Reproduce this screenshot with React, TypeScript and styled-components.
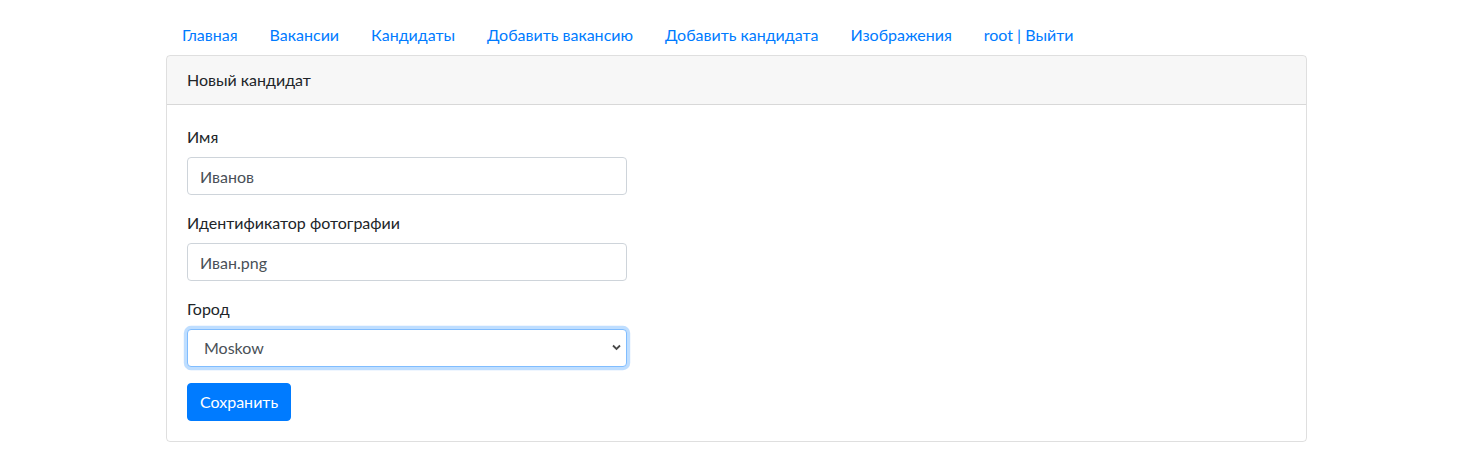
import React from "react";
import styled, { createGlobalStyle } from "styled-components";

const Global = createGlobalStyle`
  * { box-sizing: border-box; }
  body {
    margin: 0;
    font-family: Lato, "Noto Sans", "Liberation Sans", sans-serif;
    font-size: 16px;
    line-height: 1.5;
    color: #212529;
    background: #fff;
  }
`;

const Container = styled.div`
  width: 1141px;
  margin: 0 auto;
  padding-top: 15px;
`;

const Nav = styled.nav`
  display: flex;
  height: 40px;
`;

const NavLink = styled.a`
  display: block;
  padding: 8px 16px;
  color: #007bff;
  text-decoration: none;
  line-height: 24px;
`;

const Card = styled.div`
  border: 1px solid rgba(0, 0, 0, 0.125);
  border-radius: 4px;
  overflow: hidden;
`;

const CardHeader = styled.div`
  padding: 12px 20px;
  background: rgba(0, 0, 0, 0.03);
  border-bottom: 1px solid rgba(0, 0, 0, 0.125);
  line-height: 24px;
`;

const CardBody = styled.div`
  padding: 20px;
`;

const FormGroup = styled.div`
  margin-bottom: 16px;
`;

const Label = styled.label`
  display: block;
  margin-bottom: 8px;
  line-height: 24px;
`;

const Input = styled.input`
  display: block;
  width: 440px;
  height: 38px;
  padding: 6px 12px;
  font: inherit;
  color: #495057;
  background: #fff;
  border: 1px solid #ced4da;
  border-radius: 4px;
  outline: none;
`;

const SelectWrap = styled.div`
  position: relative;
  width: 440px;
`;

const Select = styled.select`
  display: block;
  width: 440px;
  height: 38px;
  padding: 6px 12px 6px 16px;
  font: inherit;
  color: #495057;
  background: #fff;
  border: 1px solid #80bdff;
  border-radius: 4px;
  box-shadow: 0 0 0 3.2px rgba(0, 123, 255, 0.25);
  outline: none;
  appearance: none;
  -webkit-appearance: none;
`;

const Chevron = styled.svg`
  position: absolute;
  right: 6px;
  top: 15px;
  pointer-events: none;
`;

const Button = styled.button`
  height: 38px;
  padding: 6px 12px;
  font: inherit;
  line-height: 24px;
  color: #fff;
  background: #007bff;
  border: 1px solid #007bff;
  border-radius: 4px;
`;

export default function App() {
  const links = [
    "Главная",
    "Вакансии",
    "Кандидаты",
    "Добавить вакансию",
    "Добавить кандидата",
    "Изображения",
    "root | Выйти",
  ];
  return (
    <>
      <Global />
      <Container>
        <Nav>
          {links.map((l) => (
            <NavLink key={l} href="#">
              {l}
            </NavLink>
          ))}
        </Nav>
        <Card>
          <CardHeader>Новый кандидат</CardHeader>
          <CardBody>
            <FormGroup>
              <Label>Имя</Label>
              <Input defaultValue="Иванов" />
            </FormGroup>
            <FormGroup>
              <Label>Идентификатор фотографии</Label>
              <Input defaultValue="Иван.png" />
            </FormGroup>
            <FormGroup>
              <Label>Город</Label>
              <SelectWrap>
                <Select defaultValue="Moskow">
                  <option>Moskow</option>
                </Select>
                <Chevron width="9" height="7" viewBox="0 0 9 7">
                  <path d="M1 1.5 L4.5 5 L8 1.5" fill="none" stroke="#4a4a4a" strokeWidth="1.8" />
                </Chevron>
              </SelectWrap>
            </FormGroup>
            <Button>Сохранить</Button>
          </CardBody>
        </Card>
      </Container>
    </>
  );
}
